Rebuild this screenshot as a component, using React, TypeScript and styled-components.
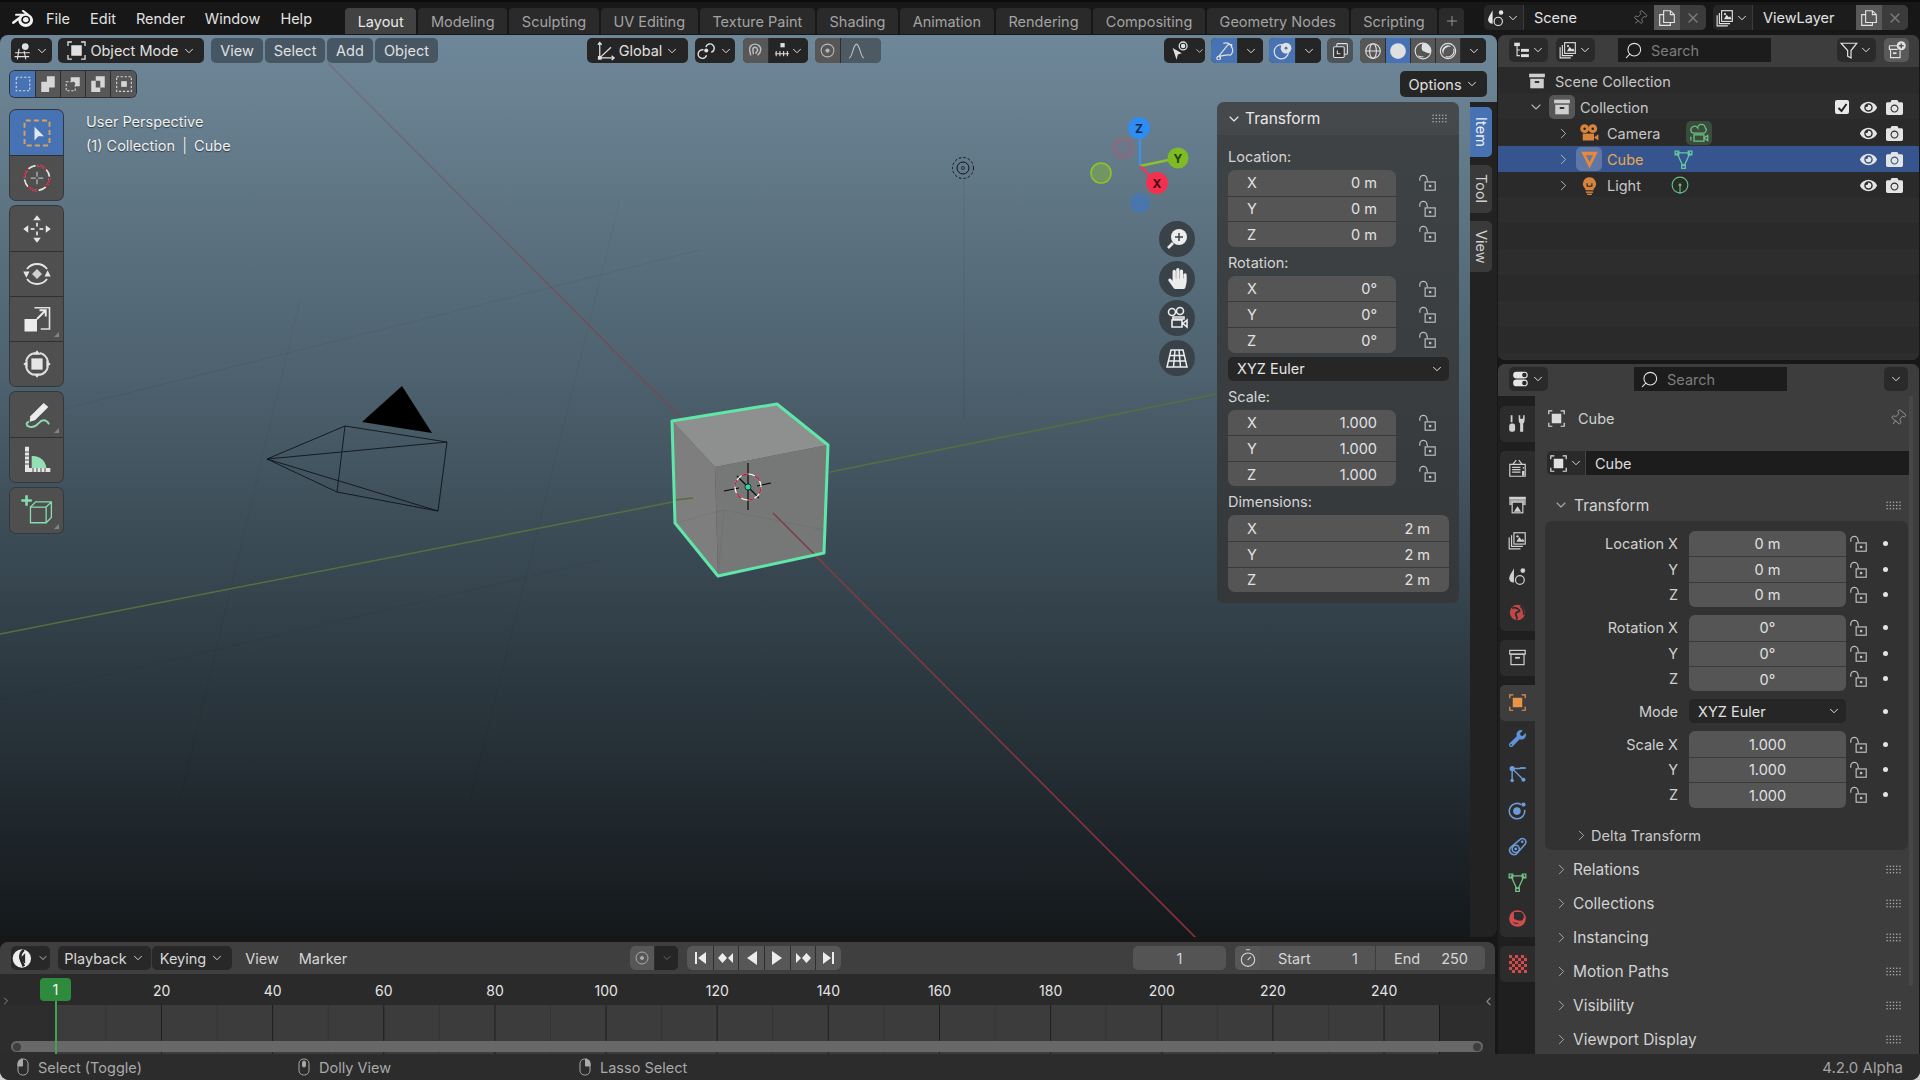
import React from 'react'
import styled, { createGlobalStyle } from 'styled-components'
import { ChevronDown, ChevronRight, ChevronLeft, Search, X, Pin, Plus, Timer } from 'lucide-react'
import { FaWrench, FaHandPaper, FaEye, FaCamera } from 'react-icons/fa'
import { SiBlender } from 'react-icons/si'

const GlobalStyle = createGlobalStyle`
  html, body {
    margin: 0;
    width: 100%;
    height: 100%;
    overflow: hidden;
    background: #cfcfcf;
  }
  * { box-sizing: border-box; }
`

const Window = styled.div`
  width: 1920px;
  height: 1080px;
  background: #171717;
  border-radius: 0 0 9px 9px;
  overflow: hidden;
  display: flex;
  flex-direction: column;
  font-family: Inter, "Liberation Sans", sans-serif;
  font-size: 14.5px;
  color: #d6d6d6;
`

/* top bar */
const TopBar = styled.header`
  height: 35px;
  flex: none;
  display: flex;
  align-items: stretch;
  border-top: 2px solid #0c0c0c;
  padding-right: 12px;
`
const LogoBox = styled.div`
  width: 46px;
  padding-left: 12px;
  display: flex;
  align-items: center;
  color: #f2f2f2;
`
const Menu = styled.nav`
  width: 299px;
  display: flex;
  align-items: center;
  gap: 20px;
`
const MenuItem = styled.span`
  color: #e2e2e2;
`
const Tabs = styled.div`
  width: 1119px;
  display: flex;
  align-items: flex-end;
  gap: 2px;
  padding-bottom: 1px;
`
const Tab = styled.div<{ $active?: boolean }>`
  height: 26px;
  padding: 0 12.65px;
  display: flex;
  align-items: center;
  border-radius: 4px 4px 0 0;
  background: ${p => (p.$active ? '#424242' : '#2a2a2a')};
  color: ${p => (p.$active ? '#e8e8e8' : '#a3a3a3')};
  white-space: nowrap;
`
const TabAdd = styled(Tab)`
  flex: 1;
  padding: 0 4px 0 0;
  justify-content: flex-end;
`
const ScenePickers = styled.div`
  margin-left: auto;
  display: flex;
  align-items: center;
  gap: 7px;
  padding-bottom: 2px;
`
const Picker = styled.div`
  height: 25px;
  display: flex;
  border-radius: 5px;
  overflow: hidden;
  box-shadow: inset 0 0 0 1px #2f2f2f;
`
const PickIcon = styled.div`
  width: 40px;
  background: #262626;
  display: flex;
  align-items: center;
  justify-content: center;
  gap: 1px;
  color: #e4e4e4;
  border-right: 1px solid #3c3c3c;
`
const PickName = styled.div<{ $w: number }>`
  width: ${p => p.$w}px;
  background: #1c1c1c;
  display: flex;
  align-items: center;
  justify-content: space-between;
  padding: 0 6px 0 10px;
  color: #e2e2e2;
`
const PickBtn = styled.div<{ $tone: 'copy' | 'close' }>`
  width: 26px;
  display: flex;
  align-items: center;
  justify-content: center;
  background: ${p => (p.$tone === 'copy' ? '#595959' : '#3b3b3b')};
  color: ${p => (p.$tone === 'copy' ? '#e4e4e4' : '#7b7b7b')};
`

/* body grid */
const Workspace = styled.main`
  flex: 1;
  min-height: 0;
  display: flex;
  gap: 1px;
`
const LeftColumn = styled.div`
  width: 1497px;
  display: flex;
  flex-direction: column;
  gap: 5px;
`
const RightColumn = styled.div`
  width: 421px;
  display: flex;
  flex-direction: column;
  gap: 4px;
`

/* viewport */
const Viewport = styled.section`
  position: relative;
  height: 902px;
  flex: none;
  border-radius: 8px;
  overflow: hidden;
  background: linear-gradient(#6f8899 0%, #4d616e 38%, #2d3a42 70%, #14181b 100%);
`
const Scene = styled.svg`
  position: absolute;
  inset: 0;
  width: 100%;
  height: 100%;
`
const ViewportLayer = styled.div`
  position: relative;
  height: 100%;
  display: flex;
  flex-direction: column;
`
const HeaderRow = styled.div`
  height: 25px;
  margin-top: 3px;
  padding: 0 11px;
  display: flex;
  flex: none;
`
const HBtn = styled.div<{ $w: number; $ml?: number; $tone?: 'dark' | 'glass' | 'blue' | 'grey' }>`
  width: ${p => p.$w}px;
  margin-left: ${p => p.$ml ?? 0}px;
  height: 25px;
  flex: none;
  display: flex;
  align-items: center;
  justify-content: center;
  gap: 3px;
  border-radius: 5px;
  overflow: hidden;
  color: #e0e0e0;
  background: ${p =>
    p.$tone === 'glass' ? '#465663' : p.$tone === 'grey' ? '#4d5458' : p.$tone === 'blue' ? '#4772b3' : '#252525'};
`
const HSegs = styled(HBtn)`
  gap: 0;
  justify-content: flex-start;
`
const ObjVisBtn = styled(HBtn)`
  padding-left: 6px;
`
const Seg = styled.div<{ $w: number; $tone?: 'dark' | 'grey' | 'blue' | 'light' | 'dim' }>`
  width: ${p => p.$w}px;
  height: 100%;
  flex: none;
  display: flex;
  align-items: center;
  justify-content: center;
  background: ${p =>
    ({ dark: '#252525', grey: '#575757', blue: '#4772b3', light: '#6a6a6a', dim: '#4e5a63' }[p.$tone ?? 'dark'])};
  & + & { border-left: 1px solid #2e2e2e; }
`
const FalloffSeg = styled(Seg)`
  padding-right: 9px;
  border-left: none;
`
const ToolSettings = styled.div`
  height: 26px;
  margin-top: 8px;
  padding: 0 10px;
  display: flex;
  justify-content: space-between;
  flex: none;
`
const ModeSet = styled.div`
  height: 26px;
  display: flex;
  border-radius: 5px;
  overflow: hidden;
  box-shadow: 0 0 0 1px #2b3136;
`
const OptionsBtn = styled(HBtn)`
  height: 26px;
`
const ViewBody = styled.div`
  flex: 1;
  margin-top: 5px;
  min-height: 0;
  display: flex;
`
const Toolbar = styled.div`
  width: 53px;
  margin: 8px 0 0 10px;
  display: flex;
  flex-direction: column;
  gap: 6px;
  flex: none;
`
const ToolGroup = styled.div`
  border-radius: 6px;
  overflow: hidden;
  background: #4f4f4f;
  box-shadow: 0 0 0 1px #32383c;
`
const ToolBtn = styled.div<{ $active?: boolean; $more?: boolean }>`
  position: relative;
  height: 45px;
  display: flex;
  align-items: center;
  justify-content: center;
  background: ${p => (p.$active ? '#4772b3' : '#4f4f4f')};
  & + & { border-top: 1px solid #303030; }
  &::after {
    content: "";
    display: ${p => (p.$more ? 'block' : 'none')};
    position: absolute;
    right: 4px;
    bottom: 4px;
    border-style: solid;
    border-width: 0 0 5px 5px;
    border-color: transparent transparent #858585 transparent;
  }
`
const ViewInfo = styled.div`
  margin: 8px 0 0 23px;
  line-height: 24px;
  color: #f0f0f0;
  text-shadow: 0 1px 1px rgba(0, 0, 0, 0.55);
  white-space: nowrap;
`
const InfoBar = styled.span`
  margin: 0 3px;
`
const NavColumn = styled.div`
  margin: 119px 22px 0 auto;
  width: 36px;
  display: flex;
  flex-direction: column;
  gap: 3.5px;
  flex: none;
`
const NavBtn = styled.div`
  width: 36px;
  height: 36px;
  border-radius: 50%;
  background: #3a4249;
  display: flex;
  align-items: center;
  justify-content: center;
  color: #ececec;
`
const NPanel = styled.aside`
  width: 242px;
  height: 501px;
  flex: none;
  border-radius: 7px;
  background: rgba(54, 54, 54, 0.82);
  overflow: hidden;
`
const NPanelHead = styled.div`
  height: 33px;
  display: flex;
  align-items: center;
  padding: 0 12px 0 9px;
  gap: 3px;
  font-size: 15.5px;
  color: #e8e8e8;
  background: rgba(90, 90, 90, 0.28);
`
const GripBox = styled.div`
  margin-left: auto;
  display: flex;
`
const NPanelBody = styled.div`
  padding: 14px 0 0 11px;
`
const NLabel = styled.div<{ $mt?: number }>`
  height: 16px;
  line-height: 16px;
  margin-top: ${p => p.$mt ?? 0}px;
  margin-bottom: 5px;
  color: #d4d4d4;
`
const NBlock = styled.div`
  margin-bottom: 8px;
`
const NRow = styled.div`
  display: flex;
  align-items: center;
`
const NField = styled.div<{ $w: number; $top?: boolean; $bottom?: boolean }>`
  width: ${p => p.$w}px;
  height: 25.6px;
  padding: 0 19px 0 19px;
  display: flex;
  align-items: center;
  justify-content: space-between;
  background: #555555;
  border-top: ${p => (p.$top ? 'none' : '1px solid #3a3a3a')};
  border-radius: ${p => (p.$top ? '7px 7px' : '0 0')} ${p => (p.$bottom ? '7px 7px' : '0 0')};
  color: #e2e2e2;
`
const LockCell = styled.div`
  width: 52px;
  padding-left: 22px;
  display: flex;
  align-items: center;
`
const NSelect = styled.div`
  width: 221px;
  height: 24px;
  margin: -4px 0 8px;
  padding: 0 5px 0 9px;
  display: flex;
  align-items: center;
  justify-content: space-between;
  background: #262626;
  border-radius: 5px;
  color: #e4e4e4;
`
const SideStrip = styled.div`
  width: 27px;
  margin-left: 11px;
  flex: none;
  background: #222222;
  padding-top: 5px;
  display: flex;
  flex-direction: column;
  gap: 8px;
`
const SideTab = styled.div<{ $active?: boolean; $h: number }>`
  width: 22px;
  height: ${p => p.$h}px;
  writing-mode: vertical-rl;
  display: flex;
  align-items: center;
  justify-content: center;
  font-size: 14.5px;
  border-radius: 0 5px 5px 0;
  background: ${p => (p.$active ? '#4772b3' : '#3a3a3a')};
  color: ${p => (p.$active ? '#f0f0f0' : '#cfcfcf')};
`

/* timeline */
const Timeline = styled.section`
  position: relative;
  height: 112px;
  flex: none;
  width: 1495px;
  border-radius: 8px 8px 0 0;
  overflow: hidden;
  background: #2a2a2a;
`
const TimeHeader = styled.div`
  height: 32px;
  padding: 4px 0 4px 11px;
  display: flex;
  background: #3f3f3f;
`
const TimeBtn = styled.div<{ $w: number; $ml?: number; $tone?: 'dark' | 'field' | 'plain' }>`
  width: ${p => p.$w}px;
  margin-left: ${p => p.$ml ?? 0}px;
  height: 24px;
  flex: none;
  display: flex;
  align-items: center;
  justify-content: center;
  gap: 4px;
  border-radius: 5px;
  overflow: hidden;
  background: ${p => (p.$tone === 'field' ? '#545454' : p.$tone === 'plain' ? 'transparent' : '#282828')};
`
const TimeSegs = styled(TimeBtn)`
  gap: 0;
  justify-content: flex-start;
`
const FieldPair = styled.div<{ $w: number }>`
  width: ${p => p.$w}px;
  height: 100%;
  padding: 0 17px 0 18px;
  display: flex;
  align-items: center;
  justify-content: space-between;
  background: #545454;
  & + & { border-left: 1px solid #3d3d3d; }
`
const Ruler = styled.div`
  height: 31px;
  padding: 2px 0 0 106px;
  display: grid;
  grid-template-columns: repeat(12, 111.15px);
  align-items: center;
  text-align: center;
  color: #e4e4e4;
  font-size: 14px;
`
const Tracks = styled.div`
  position: relative;
  height: 49px;
  background-color: #2d2d2d;
`
const FrameRange = styled.div`
  margin-left: 56px;
  width: 1384px;
  height: 100%;
  background-color: #3c3c3c;
  background-image:
    linear-gradient(90deg, #1f1f1f 1px, transparent 1px),
    linear-gradient(90deg, #333333 1px, transparent 1px);
  background-size: 111.15px 100%, 55.575px 100%;
  background-position: 105px 0, 49.5px 0;
  border-right: 1px solid #171717;
`
const Scrollbar = styled.div`
  position: absolute;
  left: 11px;
  right: 12px;
  bottom: 2px;
  height: 11px;
  border-radius: 6px;
  background: #686868;
  display: flex;
  justify-content: space-between;
  align-items: center;
  padding: 0 2px;
`
const ScrollKnob = styled.i`
  width: 8px;
  height: 8px;
  border-radius: 50%;
  background: #3e3e3e;
`
const PlayheadTag = styled.div`
  position: absolute;
  left: 40px;
  top: 36px;
  width: 31px;
  height: 23px;
  background: #2e8b3d;
  border-radius: 4px;
  display: flex;
  align-items: center;
  justify-content: center;
  color: #f2f2f2;
`
const PlayheadLine = styled.div`
  position: absolute;
  left: 55px;
  top: 59px;
  bottom: 0;
  width: 2px;
  background: #46a052;
`
const EdgeArrow = styled.div<{ $side: 'left' | 'right' }>`
  position: absolute;
  top: 53px;
  ${p => p.$side}: 0;
  color: #8a8a8a;
  display: flex;
`

/* outliner */
const Outliner = styled.section`
  height: 325px;
  flex: none;
  border-radius: 7px;
  overflow: hidden;
  background: #2a2a2a;
  display: flex;
  flex-direction: column;
`
const AreaHead = styled.div`
  height: 32px;
  flex: none;
  padding: 3px 11px 0;
  display: flex;
  background: #3d3d3d;
`
const AreaBtn = styled.div<{ $w: number; $ml?: number; $tone?: 'dark' | 'grey' }>`
  width: ${p => p.$w}px;
  margin-left: ${p => p.$ml ?? 0}px;
  height: 24px;
  flex: none;
  border-radius: 5px;
  display: flex;
  align-items: center;
  justify-content: center;
  gap: 1px;
  color: #e0e0e0;
  background: ${p => (p.$tone === 'grey' ? '#5a5a5a' : '#2a2a2a')};
`
const SearchBox = styled.div<{ $ml: number }>`
  width: 153px;
  height: 24px;
  margin-left: ${p => p.$ml}px;
  flex: none;
  display: flex;
  align-items: center;
  gap: 8px;
  padding-left: 6px;
  background: #1c1c1c;
  color: #7c7c7c;
  & > svg { color: #e0e0e0; }
`
const Tree = styled.div`
  flex: 1;
  padding-top: 1px;
  background: repeating-linear-gradient(#2a2a2a 0 26px, #2d2d2d 26px 52px);
`
const TreeRow = styled.div<{ $indent: number; $selected?: boolean }>`
  height: 26px;
  display: flex;
  align-items: center;
  padding-left: ${p => p.$indent}px;
  padding-right: 16px;
  background: ${p => (p.$selected ? '#36558e' : 'transparent')};
  color: ${p => (p.$selected ? '#e6a94e' : '#c6c6c6')};
`
const Expander = styled.span`
  width: 26px;
  flex: none;
  display: flex;
  justify-content: center;
  color: #b5b5b5;
`
const TreeIcon = styled.span<{ $halo?: boolean }>`
  width: 26px;
  height: 24px;
  flex: none;
  display: flex;
  align-items: center;
  justify-content: center;
  border-radius: 5px;
  background: ${p => (p.$halo ? 'rgba(255, 255, 255, 0.2)' : 'transparent')};
`
const TreeLabel = styled.span<{ $w?: number }>`
  margin-left: 5px;
  width: ${p => (p.$w ? `${p.$w}px` : 'auto')};
  flex: none;
`
const DataIcon = styled(TreeIcon)<{ $green?: boolean }>`
  background: ${p => (p.$green ? 'rgba(120, 200, 130, 0.22)' : 'transparent')};
`
const RowTools = styled.span`
  margin-left: auto;
  display: flex;
  align-items: center;
  gap: 9px;
  color: #e4e4e4;
`
const CheckMark = styled.span`
  width: 14px;
  height: 14px;
  margin-right: 2px;
  border-radius: 2px;
  background: #e8e8e8;
  color: #222;
  display: flex;
  align-items: center;
  justify-content: center;
`

/* properties */
const Properties = styled.section`
  height: 690px;
  flex: none;
  border-radius: 7px 7px 0 0;
  overflow: hidden;
  background: #3d3d3d;
  display: flex;
  flex-direction: column;
`
const PropsBody = styled.div`
  flex: 1;
  min-height: 0;
  display: flex;
`
const PropTabs = styled.div`
  width: 37px;
  flex: none;
  padding: 9.5px 0 0 2px;
  background: #1f1f1f;
  display: flex;
  flex-direction: column;
  gap: 9px;
`
const PropTabGroup = styled.div`
  background: #2c2c2c;
  border-radius: 5px 0 0 5px;
`
const PropTab = styled.div<{ $active?: boolean }>`
  height: 36px;
  display: flex;
  align-items: center;
  justify-content: center;
  border-radius: 5px 0 0 5px;
  background: ${p => (p.$active ? '#3d3d3d' : 'transparent')};
`
const PropMain = styled.div`
  position: relative;
  flex: 1;
  min-width: 0;
  padding: 9px 10px 0 12px;
  overflow: hidden;
`
const ContextRow = styled.div`
  height: 26px;
  display: flex;
  align-items: center;
  gap: 12px;
  color: #d0d0d0;
  padding-right: 2px;
  & > svg:last-child { margin-left: auto; color: #9a9a9a; }
`
const NameField = styled.div`
  height: 24px;
  margin-top: 20px;
  display: flex;
  border-radius: 5px 0 0 5px;
  overflow: hidden;
`
const NameIcon = styled.div`
  width: 39px;
  background: #2a2a2a;
  display: flex;
  align-items: center;
  justify-content: center;
  gap: 1px;
  border-right: 1px solid #444;
`
const NameInput = styled.div`
  flex: 1;
  background: #1c1c1c;
  padding-left: 9px;
  display: flex;
  align-items: center;
  color: #dcdcdc;
`
const PanelHead = styled.div<{ $h: number }>`
  height: ${p => p.$h}px;
  display: flex;
  align-items: center;
  gap: 3px;
  padding: 0 8px 0 6px;
  font-size: 15.5px;
  color: #d2d2d2;
  & > svg { color: #a8a8a8; flex: none; }
`
const TransformHead = styled(PanelHead)`
  padding-top: 14px;
  gap: 5px;
`
const SubPanel = styled.div`
  margin: 0 1px 3.4px -2px;
  padding: 10px 0 2px;
  border-radius: 7px;
  background: #323232;
  display: flex;
  flex-direction: column;
  gap: 8px;
`
const PropBlock = styled.div``
const PropRow = styled.div`
  height: 25.4px;
  display: grid;
  grid-template-columns: 132px 157px 27px 26px;
  column-gap: 0;
  align-items: center;
`
const ModeRow = styled(PropRow)`
  height: 24px;
`
const PropLabel = styled.span`
  text-align: right;
  margin-right: -1px;
  color: #d0d0d0;
  grid-column: 1;
  padding-right: 0;
`
const PropFieldWrap = styled.div`
  grid-column: 2;
  margin-left: 12px;
  width: 157px;
`
const PropField = styled.div<{ $top?: boolean; $bottom?: boolean }>`
  height: 25.4px;
  display: flex;
  align-items: center;
  justify-content: center;
  background: #555555;
  border-top: ${p => (p.$top ? 'none' : '1px solid #3a3a3a')};
  border-radius: ${p => (p.$top ? '6px 6px' : '0 0')} ${p => (p.$bottom ? '6px 6px' : '0 0')};
  color: #e0e0e0;
`
const PropSelect = styled.div`
  height: 24px;
  padding: 0 5px 0 9px;
  border-radius: 5px;
  display: flex;
  align-items: center;
  justify-content: space-between;
  background: #262626;
  color: #e0e0e0;
`
const PropLock = styled.div`
  grid-column: 3;
  margin-left: 15px;
  display: flex;
  justify-content: flex-start;
`
const PropDot = styled.i`
  grid-column: 4;
  margin-left: 22px;
  width: 5px;
  height: 5px;
  border-radius: 50%;
  background: #e4e4e4;
`
const DeltaRow = styled.div`
  height: 24px;
  margin-top: 8px;
  padding-left: 28px;
  display: flex;
  align-items: center;
  gap: 1px;
  color: #c8c8c8;
  & > svg { color: #a8a8a8; }
`
const PropScroll = styled.div`
  position: absolute;
  right: 6px;
  top: 0;
  height: 590px;
  width: 4px;
  border-radius: 2px;
  background: #474747;
`

/* status bar */
const StatusBar = styled.footer`
  height: 26px;
  flex: none;
  padding: 0 17px 0 14px;
  display: flex;
  align-items: center;
  background: #2c2c2c;
  color: #a9a9a9;
`
const StatusItem = styled.div`
  width: 281px;
  display: flex;
  align-items: center;
  gap: 6px;
`
const Version = styled.div`
  margin-left: auto;
  font-size: 15px;
  color: #a4a4a4;
`

/* drawn icons */
const Glyph = styled.svg<{ $s: number; $c?: string }>`
  width: ${p => p.$s}px;
  height: ${p => p.$s}px;
  flex: none;
  color: ${p => p.$c ?? 'inherit'};
`
type IconProps = { s?: number; c?: string }
const mk = (body: React.ReactNode, box = 16) => ({ s = 18, c }: IconProps) => (
  <Glyph viewBox={`0 0 ${box} ${box}`} $s={s} $c={c} fill="none" stroke="currentColor" strokeWidth="1">
    {body}
  </Glyph>
)

const Brackets = 'M1.5 4.5v-3h3M11.5 1.5h3v3M14.5 11.5v3h-3M4.5 14.5h-3v-3'
const ObjectIcon = mk(<><path d={Brackets} /><rect x="4" y="4" width="8" height="8" fill="currentColor" stroke="none" /></>)
const View3DIcon = mk(<><circle cx="10" cy="4" r="3" fill="currentColor" stroke="none" /><path d="M1 9.5h13M0.5 13h13M4.5 6l-1.5 9.5M9 8l1.5 7.5" /></>)
const OrientIcon = mk(<path d="M3 1.5v12h11M1.5 3L3 1.2 4.5 3M12.5 11.8l2 1.7-2 1.7M3 13.5L12 5M2 12.5h2v2H2z" />)
const LinkIcon = mk(<><path d="M5.5 7.500A3.600 3.600 0 1 0 8 12M7.500 5a3.600 3.600 0 1 1 4.500 4.500" strokeWidth="1.200" /><circle cx="7.800" cy="8" r="1.700" fill="currentColor" stroke="none" /></>)
const MagnetIcon = mk(<path d="M3.500 12.500L2.500 7.500C2 4 4.800 2 7.500 2s5.500 2 5.500 5c0 2-1 3.500-3 5.500M6 11.500L5.500 7.500C5.500 6 6.500 5 7.500 5s2.500 1 2.500 2.500c0 1-1 2-2 3.500" strokeWidth="1.400" />)
const SnapIcon = mk(<><rect x="7" y="1" width="4" height="4" fill="currentColor" stroke="none" /><path d="M2 11h13M3 8.500v5M6.500 8.500v5M10 8.500v5M13.500 8.500v5" /></>)
const PropCircleIcon = mk(<><circle cx="8" cy="8" r="6" /><circle cx="8" cy="8" r="1.500" fill="currentColor" /></>)
const FalloffIcon = mk(<path d="M1 15c3 0 4-13 7-13s4 13 7 13" />)
const ObjVisIcon = mk(<><path d="M2 6l7 4-3 1-1 4z" fill="currentColor" stroke="none" /><circle cx="10" cy="4.500" r="3" /><circle cx="10" cy="4.500" r="1.200" fill="currentColor" /></>)
const GizmoIcon = mk(<path d="M3 13L11 3M3 13c4-1 8-2 10-1M11 3l3 0 0 3M13 12a6 6 0 0 0-6-10M3 13a1.500 1.500 0 1 0 .1 0" />)
const OverlayIcon = mk(<><circle cx="7" cy="9" r="6" /><path d="M7 3a6 6 0 0 1 0 12 5 5 0 0 0 0-12z" fill="currentColor" stroke="none" /><circle cx="11" cy="6" r="4.500" fill="currentColor" stroke="none" /><circle cx="11" cy="6" r="1.200" fill="#4772b3" stroke="none" /></>)
const XrayIcon = mk(<><rect x="4.500" y="1.500" width="10" height="10" rx="1" /><rect x="1.500" y="4.500" width="10" height="10" rx="1" fill="#333" /><path d="M5 8v3h3" /></>)
const WireSphere = mk(<><circle cx="8" cy="8" r="6.500" /><ellipse cx="8" cy="8" rx="3" ry="6.500" /><path d="M1.500 8h13" /></>)
const SolidSphere = mk(<circle cx="8" cy="8" r="7" fill="currentColor" stroke="none" />)
const MatSphere = mk(<><circle cx="8" cy="8" r="7" fill="#555" stroke="currentColor" /><path d="M8 1a7 7 0 0 1 7 7c0 3-3 2-7 0-2-1-1-7 0-7zM3 12c2 2 5 2 6 1z" fill="currentColor" stroke="none" /></>)
const RenderSphere = mk(<><circle cx="8" cy="8" r="6.800" /><path d="M4 11a5 5 0 0 1 7-7 6 6 0 0 0-7 7z" fill="currentColor" stroke="none" /><path d="M6 13a5.500 5.500 0 0 0 7-7" /></>)
const Dash = { strokeDasharray: '2 1.500' }
const SelSet = mk(<rect x="2" y="2" width="12" height="12" {...Dash} />)
const SelExtend = mk(<path d="M7 1h7v10H9v4H2V6h5z" fill="currentColor" stroke="none" />)
const SelSub = mk(<><path d="M6 2h8v8h-4V6H6z" fill="currentColor" stroke="none" /><rect x="2" y="6" width="8" height="8" {...Dash} /></>)
const SelDiff = mk(<path fillRule="evenodd" d="M6 1h8v10h-4v4H2V5h4zM6 5v6h4V5z" fill="currentColor" stroke="none" />)
const SelAnd = mk(<><rect x="1.500" y="1.500" width="13" height="13" {...Dash} /><rect x="5.500" y="5.500" width="5" height="5" fill="currentColor" stroke="none" /></>)

const ToolSelect = mk(<><rect x="2" y="2" width="20" height="20" rx="1" stroke="#d8a35c" strokeWidth="1.500" strokeDasharray="4 2.500" /><path d="M10 7v11l3-3.500h4.500z" fill="#dfe7f5" stroke="none" /></>, 24)
const ToolCursor = mk(<><circle cx="12" cy="12" r="10" stroke="#e8e8e8" strokeWidth="1.300" strokeDasharray="6.400 1.450" /><circle cx="12" cy="12" r="10" stroke="#b0283f" strokeWidth="1.400" strokeDasharray="7.850 7.850" /><path d="M12 7v4M12 13v4M7 12h4M13 12h4" stroke="#b8b8b8" strokeWidth="1" /></>, 24)
const ToolMove = mk(<><path d="M12 1l3 4H9zM12 23l3-4H9zM1 12l4-3v6zM23 12l-4-3v6z" fill="#e6e6e6" stroke="none" /><path d="M12 7v3M12 14v3M7 12h3M14 12h3" stroke="#d0d0d0" strokeWidth="1.600" /></>, 24)
const ToolRotate = mk(<><path d="M4 8a10 10 0 0 1 16 0M20 16a10 10 0 0 1-16 0" stroke="#e6e6e6" strokeWidth="1.500" /><path d="M12 8l4 4-4 4-4-4z" fill="#cfcfcf" stroke="none" /><path d="M1 10l5 0-2.500 5zM23 14l-5 0 2.500-5z" fill="#e6e6e6" stroke="none" /></>, 24)
const ToolScale = mk(<><path d="M10 3h12v17h-7" stroke="#e0e0e0" strokeWidth="1.300" /><rect x="2" y="12" width="10" height="10" fill="#ececec" stroke="none" /><path d="M12 12l7-7M14 5h5v5" stroke="#ececec" strokeWidth="1.500" /></>, 24)
const ToolTransform = mk(<><circle cx="12" cy="12" r="9" stroke="#dedede" strokeWidth="1.600" strokeDasharray="10.500 3.630" strokeDashoffset="12.300" /><rect x="7.500" y="7.500" width="9" height="9" fill="#e6e6e6" stroke="none" /><path d="M12 1l2.800 3.500H9.200zM12 23l2.800-3.500H9.200zM1 12l3.500-2.800v5.600zM23 12l-3.500-2.800v5.600z" fill="#e6e6e6" stroke="none" /></>, 24)
const ToolAnnotate = mk(<><path d="M7 13L17 3l3.500 3L10.500 16l-4 1z" fill="#ececec" stroke="none" /><path d="M6 17c-3 1-2 4 2 4 5 0 5-5 9-5 2 0 3 1 4 3" stroke="#8fd8b0" strokeWidth="1.500" /></>, 24)
const ToolMeasure = mk(<><path d="M8 20V9a10 10 0 0 1 11 11z" fill="#93e0b4" stroke="none" /><path d="M3 21h19v-3H6V2H3z" fill="#e4e4e4" stroke="none" /><path d="M9 18v3M12 18v3M15 18v3M18 18v3M3 6h3M3 9h3M3 12h3M3 15h3" stroke="#555" strokeWidth=".8" /></>, 24)
const ToolAdd = mk(<><path d="M8 10h12v12H8zM8 10l4-4h12v12l-4 4M20 10l4-4" stroke="#86dcae" strokeWidth="1" fill="none" /><path d="M5 1v8M1 5h8" stroke="#86dcae" strokeWidth="2" /></>, 26)

const ZoomNav = mk(<><path d="M3 21l5-5" stroke="currentColor" strokeWidth="2.600" /><circle cx="14" cy="10" r="8" fill="currentColor" stroke="none" /><path d="M14 6v8M10 10h8" stroke="#3a4249" strokeWidth="1.500" /></>, 24)
const CameraNav = mk(<><circle cx="7" cy="6" r="3.500" strokeWidth="1.600" /><circle cx="15" cy="5" r="3.500" strokeWidth="1.600" /><path d="M8 11h11v2H8zM7 14h10v7H7zM22 14l-4 3.500 4 3.500z" fill="none" strokeWidth="1.600" /></>, 24)
const GridNav = mk(<path d="M6 4h12l4 17H2zM4.800 9.500h14.400M3.500 15h17M10 4l-1.500 17M14 4l1.500 17" strokeWidth="1.500" />, 24)

const LockOpen = mk(<><path d="M1.500 6.500V5a3 3 0 0 1 6 0l.5 2" /><rect x="6" y="7.500" width="8.500" height="7" strokeWidth="1" /><rect x="9.200" y="10" width="2" height="2" fill="currentColor" stroke="none" /></>)
const CopyDoc = mk(<path d="M5 1.500h6l3.500 3.500V12H5zM11 1.500V5h3.500M5 5H1.500v9.500H11V12" />)
const SceneIcon = mk(<><path d="M5 1C3 5 1 7 1 10a4 4 0 0 0 4 3z" fill="currentColor" stroke="none" /><circle cx="10" cy="11" r="3.700" /><circle cx="12.500" cy="3" r="2" fill="currentColor" stroke="none" /></>)
const LayersIcon = mk(<><rect x="5" y="1.500" width="9.500" height="9.500" /><path d="M7 9l2.500-4 2 2.500 1-1 1.500 2.500z" fill="currentColor" stroke="none" /><circle cx="8" cy="4.500" r="1" fill="currentColor" stroke="none" /><path d="M3 3.500v9.500h9.500M1 5.500v9.500h9.500" /></>)
const HierarchyIcon = mk(<><rect x="2" y="1.500" width="5" height="3" fill="currentColor" stroke="none" /><path d="M4.500 4v9H7M4.500 8H7" /><rect x="8" y="7" width="7" height="2.600" fill="currentColor" stroke="none" /><rect x="8" y="11.700" width="7" height="2.600" fill="currentColor" stroke="none" /></>)
const FilterIcon = mk(<path d="M1 2h14L9.800 8.500V15l-3-1.500V8.500z" strokeWidth="1.100" />)
const NewCollIcon = mk(<><path d="M2 4h8M2 4v3h7M3 7v7h8V8" /><rect x="5" y="9.500" width="3" height="1.500" fill="currentColor" stroke="none" /><circle cx="12" cy="4" r="3.800" fill="currentColor" stroke="none" /><path d="M12 2v4M10 4h4" stroke="#555" strokeWidth="1.200" /></>)
const BoxIcon = mk(<><rect x="1" y="1.500" width="14" height="3.200" fill="currentColor" stroke="none" /><rect x="2" y="6" width="12" height="8.500" fill="currentColor" stroke="none" /><rect x="6" y="8" width="4" height="1.800" fill="#333" stroke="none" /></>)
const BoxOutline = mk(<><rect x="1.500" y="2" width="13" height="3.200" /><rect x="2.500" y="5.200" width="11" height="8.800" /><rect x="6" y="7.500" width="4" height="1.500" fill="currentColor" stroke="none" /></>)
const CamObj = mk(<><circle cx="4.500" cy="4.500" r="3.500" fill="currentColor" stroke="none" /><circle cx="11" cy="4.500" r="3.500" fill="currentColor" stroke="none" /><circle cx="4.500" cy="4.500" r="1" fill="#222" stroke="none" /><circle cx="11" cy="4.500" r="1" fill="#222" stroke="none" /><rect x="3" y="8.500" width="9" height="5.500" fill="currentColor" stroke="none" /><path d="M15.500 9v5l-3.500-2.500z" fill="currentColor" stroke="none" /></>)
const CubeObj = mk(<path fillRule="evenodd" d="M1 1.500h14L8 15.500zM5 4.500h6L8 10z" fill="currentColor" stroke="none" />)
const BulbObj = mk(<><path d="M8 1a5.500 5.500 0 0 1 3.500 9.700V12h-7v-1.300A5.500 5.500 0 0 1 8 1z" fill="currentColor" stroke="none" /><rect x="5" y="13" width="6" height="1.200" fill="currentColor" stroke="none" /><rect x="6" y="14.800" width="4" height="1.200" fill="currentColor" stroke="none" /><path d="M6 6v3M10 6v3M6 8l2 1 2-1" stroke="#2d2d2d" strokeWidth="1" /></>)
const CamData = mk(<><path d="M1.500 6A3 3 0 0 1 7 4a3 3 0 0 1 6 0c2 1 0 4-1 4H4C2.500 8 1.500 7 1.500 6z" /><rect x="4" y="9.500" width="8" height="5" /><path d="M15 10v4l-3-2zM1.500 11v3" /></>)
const MeshData = mk(<path d="M2.500 2.500h11M2.500 2.500l5 11M13.500 2.500l-5 11M1 1h3v3H1zM12 1h3v3h-3zM6.500 12.500h3v3h-3z" strokeWidth="1.100" />)
const LightData = mk(<><circle cx="8" cy="8" r="7" /><circle cx="8" cy="8" r="1.300" fill="currentColor" stroke="none" /><path d="M8 9v7" /></>)
const ToolTab = mk(<><path d="M3 1v6M5.500 1v0" strokeWidth="1.500" /><rect x="1" y="8" width="5" height="7" rx="2" fill="currentColor" stroke="none" /><path d="M9 1v4c0 2 1.200 3 1.200 3v7h2.600V8S14 7 14 5V1l-1.300 0v3h-2.400V1z" fill="currentColor" stroke="none" /></>)
const RenderTab = mk(<><path d="M1.500 4.500h13v10h-13zM9 1l3 3.500M7 1L4 4.500" /><path d="M3.500 7h7M3.500 9h7M3.500 11h7" strokeWidth="1" /><circle cx="13" cy="7.500" r=".7" fill="currentColor" stroke="none" /><rect x="11.800" y="10" width="2" height="4" fill="currentColor" stroke="none" /></>)
const OutputTab = mk(<><rect x="1" y="1.500" width="14" height="2" fill="currentColor" stroke="none" /><rect x="1" y="3.500" width="14" height="5" fill="currentColor" stroke="none" opacity=".75" /><rect x="3.500" y="6" width="9" height="9" fill="#2c2c2c" stroke="currentColor" /><path d="M5 14l3-4.500 3 4.500z" fill="currentColor" stroke="none" /></>)
const WorldTab = mk(<><circle cx="8" cy="8" r="6.500" fill="#c24848" stroke="none" /><path d="M3.500 4.500c2.500-1.500 4.500 0 6 1.500 1 2-3 1-3 3s2 3 .5 5M10.500 2.500c2.500 2 3.500 4.500 2.500 7.500" stroke="#2c2c2c" strokeWidth="1.500" /></>)
const ParticleTab = mk(<><circle cx="3.500" cy="3" r="2.200" fill="currentColor" stroke="none" /><circle cx="3.500" cy="13" r="1.500" fill="currentColor" stroke="none" /><circle cx="13" cy="12.500" r="1.700" fill="currentColor" stroke="none" /><rect x="10" y="1.800" width="5" height="1.500" fill="currentColor" stroke="none" /><path d="M3.500 3v10M3.500 3h7M3.500 3l9.500 9.500" strokeWidth="1.200" /></>)
const PhysicsTab = mk(<><path d="M11 3a6.500 6.500 0 1 0 3 4.500" strokeWidth="1.300" /><circle cx="7.500" cy="8.500" r="3.200" fill="currentColor" stroke="none" /><circle cx="13" cy="3" r="1.800" fill="currentColor" stroke="none" /></>)
const ConstraintTab = mk(<><path d="M2 9L11 1.500c3-1 5 2 3.500 4.500L7 14.500C3 16 0 12 2 9z" strokeWidth="1.300" /><circle cx="6.500" cy="10" r="3" strokeWidth="1.300" /><circle cx="6.500" cy="10" r="1.200" fill="currentColor" stroke="none" /><circle cx="12" cy="4" r="1.100" fill="currentColor" stroke="none" /></>)
const MaterialTab = mk(<><circle cx="8" cy="8" r="7" fill="#cf4c4c" stroke="none" /><path d="M5 2.500h6c3 2 3 5 1 7-2 1-4 0-7-1z" fill="#2c2c2c" stroke="none" /><path d="M4 11c2 2 4 2 5 1z" fill="#2c2c2c" stroke="none" /></>)
const TextureTab = ({ s = 18 }: IconProps) => (
  <Glyph viewBox="0 0 6 6" $s={s}>
    {Array.from({ length: 36 }).map((_, i) => {
      const x = i % 6
      const y = Math.floor(i / 6)
      return <rect key={i} x={x} y={y} width="1" height="1" fill={(x + y) % 2 === 0 ? '#cf4c4c' : '#3a2a2a'} />
    })}
  </Glyph>
)
const ClockIcon = mk(<><circle cx="7.500" cy="8" r="7" fill="currentColor" stroke="none" /><path d="M9 1.500a6.500 6.500 0 0 0-2.500 6.500L9 14" stroke="#282828" strokeWidth="2" /><path d="M10 4L6 8l4 4z" fill="#282828" stroke="none" /></>)
const MouseIcon = ({ part }: { part: 'left' | 'mid' | 'right' }) => (
  <Glyph viewBox="0 0 12 18" $s={18} fill="none" stroke="currentColor">
    <rect x="1" y="1" width="10" height="16" rx="4.500" />
    {part === 'left' && <path d="M1 8V5.500A4.500 4.500 0 0 1 5.500 1v7z" fill="currentColor" />}
    {part === 'right' && <path d="M11 8V5.500A4.500 4.500 0 0 0 6.500 1v7z" fill="currentColor" />}
    {part === 'mid' && <rect x="4.500" y="3" width="3" height="6" rx="1.500" fill="currentColor" />}
  </Glyph>
)
const Grip = () => (
  <Glyph viewBox="0 0 14 8" $s={15} fill="currentColor" $c="#b0b0b0">
    {[1, 4, 7, 10, 13].map(x => [1, 4, 7].map(y => <rect key={`${x}${y}`} x={x - 0.6} y={y - 0.6} width="1.200" height="1.200" />))}
  </Glyph>
)
const Down = ({ s = 14 }: { s?: number }) => <ChevronDown size={s} strokeWidth={1.7} />
const Right = ({ s = 17 }: { s?: number }) => <ChevronRight size={s} strokeWidth={1.4} />

const TransportIcon = ({ kind }: { kind: number }) => {
  const shapes = [
    <path key="a" d="M3 2v12h2V2zM14 2v12L6 8z" />,
    <path key="b" d="M4.500 3L0 8l4.500 5L9 8zM15 3v10L10 8z" />,
    <path key="c" d="M13 1v14L3 8z" />,
    <path key="d" d="M3 1v14l10-7z" />,
    <path key="e" d="M1 3v10l5-5zM11.500 3L7 8l4.500 5L16 8z" />,
    <path key="f" d="M13 2v12h-2V2zM2 2v12l8-6z" />,
  ]
  return <Glyph viewBox="0 0 16 16" $s={16} fill="#ececec">{shapes[kind]}</Glyph>
}

/* the 3d scene */
const SceneDrawing = () => (
  <Scene viewBox="0 35 1497 902" fill="none">
    <defs>
      <linearGradient id="redFade" x1="330" y1="60" x2="1198" y2="940" gradientUnits="userSpaceOnUse">
        <stop offset="0" stopColor="#7d4a58" stopOpacity=".35" />
        <stop offset=".5" stopColor="#7d3f4a" stopOpacity=".9" />
        <stop offset="1" stopColor="#8c2f38" />
      </linearGradient>
    </defs>
    <path d="M300 300L180 800M620 200L470 800M20 420L700 250M0 700L600 560" stroke="#000" strokeOpacity=".05" />
    <path d="M964 180V420" stroke="#000" strokeOpacity=".07" />
    <path d="M328 63L681 418M773 513L1198 940" stroke="url(#redFade)" strokeWidth="1.600" />
    <path d="M0 634L693 498M830 472L1216 394" stroke="#55703f" strokeWidth="1.500" />
    {/* camera */}
    <path d="M402 386L362 422L432 433Z" fill="#000" />
    <path d="M267 459L345 426L447 442L438 511L337 492L345 426M267 459L447 442M267 459L337 492M267 459L438 511" stroke="#101418" strokeWidth=".9" />
    {/* cube */}
    <path d="M672 421L777 404L828 445L715 467Z" fill="#8e908f" />
    <path d="M672 421L715 467L718 576L675 523Z" fill="#7d7e7d" />
    <path d="M715 467L828 445L824 553L718 576Z" fill="#767777" />
    <path d="M675 523L724 510L824 530M724 510L718 576" stroke="#000" strokeOpacity=".05" />
    <path d="M675 500L693 498" stroke="#55703f" strokeWidth="1.500" />
    <path d="M773 513L824 564" stroke="#7d3f4a" strokeWidth="1.600" />
    <path d="M672 421L777 404L828 445L824 553L718 576L675 523Z" stroke="#5fe6a8" strokeWidth="3" strokeLinejoin="round" />
    <path d="M748 463V510M724 491L739 488M757 486L771 483M737 476L759 498" stroke="#0a0a0a" strokeWidth="1.200" />
    <circle cx="748" cy="487" r="13" stroke="#fff" strokeWidth="1.200" />
    <circle cx="748" cy="487" r="13" stroke="#b5223c" strokeWidth="1.300" strokeDasharray="7 6.600" />
    <circle cx="748" cy="487" r="3" fill="#2fd8a0" stroke="#0a0a0a" strokeWidth=".7" />
    {/* light */}
    <circle cx="963" cy="168" r="10.500" stroke="#101418" strokeDasharray="2.500 2" />
    <circle cx="963" cy="168" r="6" stroke="#101418" />
    <circle cx="963" cy="168" r="1.500" stroke="#101418" strokeWidth=".7" />
    {/* gizmo */}
    <g>
      <circle cx="1123" cy="148" r="9.500" stroke="#c65067" strokeOpacity=".6" strokeWidth="1.600" fill="#c65067" fillOpacity=".1" />
      <circle cx="1101" cy="173" r="10" stroke="#8cc22e" strokeWidth="1.600" fill="#8cc22e" fillOpacity=".4" />
      <circle cx="1140" cy="203" r="10" fill="#3a77c7" fillOpacity=".6" />
      <path d="M1140 166V128" stroke="#3f8fe8" strokeWidth="2.400" />
      <path d="M1140 166L1178 158" stroke="#8cc22e" strokeWidth="2.400" />
      <path d="M1140 166L1157 183" stroke="#f0365a" strokeWidth="2.400" />
      <circle cx="1139" cy="128" r="11" fill="#2f8cf2" />
      <circle cx="1178" cy="158" r="10.500" fill="#7fbb25" />
      <circle cx="1157" cy="183" r="11" fill="#f5304f" />
      <g fontFamily="Inter, Liberation Sans, sans-serif" fontSize="12" fontWeight="700" textAnchor="middle">
        <text x="1139" y="132.500" fill="#0e2c52">Z</text>
        <text x="1178" y="162.500" fill="#23400a">Y</text>
        <text x="1157" y="187.500" fill="#4a0814">X</text>
      </g>
    </g>
  </Scene>
)

type Axis = { axis: string; value: string }
const locationRows: Axis[] = [{ axis: 'X', value: '0 m' }, { axis: 'Y', value: '0 m' }, { axis: 'Z', value: '0 m' }]
const rotationRows: Axis[] = [{ axis: 'X', value: '0°' }, { axis: 'Y', value: '0°' }, { axis: 'Z', value: '0°' }]
const scaleRows: Axis[] = [{ axis: 'X', value: '1.000' }, { axis: 'Y', value: '1.000' }, { axis: 'Z', value: '1.000' }]
const dimRows: Axis[] = [{ axis: 'X', value: '2 m' }, { axis: 'Y', value: '2 m' }, { axis: 'Z', value: '2 m' }]

const NFields = ({ rows, wide }: { rows: Axis[]; wide?: boolean }) => (
  <NBlock>
    {rows.map((r, i) => (
      <NRow key={r.axis}>
        <NField $w={wide ? 221 : 168} $top={i === 0} $bottom={i === 2}>
          <span>{r.axis}</span>
          <span>{r.value}</span>
        </NField>
        {!wide && <LockCell><LockOpen s={19} c="#bdbdbd" /></LockCell>}
      </NRow>
    ))}
  </NBlock>
)

const PropFields = ({ name, rows }: { name: string; rows: Axis[] }) => (
  <PropBlock>
    {rows.map((r, i) => (
      <PropRow key={r.axis}>
        <PropLabel>{i === 0 ? `${name} X` : r.axis}</PropLabel>
        <PropFieldWrap>
          <PropField $top={i === 0} $bottom={i === 2}>{r.value}</PropField>
        </PropFieldWrap>
        <PropLock><LockOpen s={19} c="#bdbdbd" /></PropLock>
        <PropDot />
      </PropRow>
    ))}
  </PropBlock>
)

const sectionHeads = ['Relations', 'Collections', 'Instancing', 'Motion Paths', 'Visibility', 'Viewport Display']
const rulerMarks = [20, 40, 60, 80, 100, 120, 140, 160, 180, 200, 220, 240]
const workspaceTabs = ['Modeling', 'Sculpting', 'UV Editing', 'Texture Paint', 'Shading', 'Animation', 'Rendering', 'Compositing', 'Geometry Nodes', 'Scripting']

const EyeCam = () => (
  <RowTools>
    <FaEye size={17} />
    <FaCamera size={17} />
  </RowTools>
)

export default function App() {
  return (
    <Window>
      <GlobalStyle />
      <TopBar>
        <LogoBox><SiBlender size={21} /></LogoBox>
        <Menu>
          {['File', 'Edit', 'Render', 'Window', 'Help'].map(m => <MenuItem key={m}>{m}</MenuItem>)}
        </Menu>
        <Tabs>
          <Tab $active>Layout</Tab>
          {workspaceTabs.map(t => <Tab key={t}>{t}</Tab>)}
          <TabAdd><Plus size={16} strokeWidth={1.3} /></TabAdd>
        </Tabs>
        <ScenePickers>
          <Picker>
            <PickIcon><SceneIcon s={18} /><Down /></PickIcon>
            <PickName $w={130}>Scene <Pin size={16} strokeWidth={1.2} color="#8a8a8a" style={{ transform: 'rotate(40deg)' }} /></PickName>
            <PickBtn $tone="copy"><CopyDoc s={18} /></PickBtn>
            <PickBtn $tone="close"><X size={16} /></PickBtn>
          </Picker>
          <Picker>
            <PickIcon><LayersIcon s={18} /><Down /></PickIcon>
            <PickName $w={103}>ViewLayer</PickName>
            <PickBtn $tone="copy"><CopyDoc s={18} /></PickBtn>
            <PickBtn $tone="close"><X size={16} /></PickBtn>
          </Picker>
        </ScenePickers>
      </TopBar>

      <Workspace>
        <LeftColumn>
          <Viewport>
            <SceneDrawing />
            <ViewportLayer>
              <HeaderRow>
                <HBtn $w={41}><View3DIcon s={18} /><Down /></HBtn>
                <HBtn $w={146} $ml={6}><ObjectIcon s={21} />Object Mode<Down /></HBtn>
                <HBtn $w={52} $ml={7} $tone="glass">View</HBtn>
                <HBtn $w={60} $ml={2} $tone="glass">Select</HBtn>
                <HBtn $w={46} $ml={2} $tone="glass">Add</HBtn>
                <HBtn $w={63} $ml={2} $tone="glass">Object</HBtn>
                <HBtn $w={101} $ml={149}><OrientIcon s={20} />Global<Down /></HBtn>
                <HBtn $w={40} $ml={7}><LinkIcon s={19} /><Down /></HBtn>
                <HSegs $w={65} $ml={8}>
                  <Seg $w={25} $tone="grey"><MagnetIcon s={17} c="#bdbdbd" /></Seg>
                  <Seg $w={40}><SnapIcon s={17} /><Down /></Seg>
                </HSegs>
                <HSegs $w={66} $ml={7} $tone="grey">
                  <Seg $w={25} $tone="grey"><PropCircleIcon s={17} c="#b8b8b8" /></Seg>
                  <FalloffSeg $w={41} $tone="dim"><FalloffIcon s={17} c="#c0c0c0" /></FalloffSeg>
                </HSegs>
                <ObjVisBtn $w={41} $ml={283}><ObjVisIcon s={21} /><Down /></ObjVisBtn>
                <HSegs $w={52} $ml={6}>
                  <Seg $w={26} $tone="blue"><GizmoIcon s={19} /></Seg>
                  <Seg $w={26}><Down /></Seg>
                </HSegs>
                <HSegs $w={52} $ml={6}>
                  <Seg $w={26} $tone="blue"><OverlayIcon s={19} /></Seg>
                  <Seg $w={26}><Down /></Seg>
                </HSegs>
                <HBtn $w={26} $ml={6} $tone="grey"><XrayIcon s={17} /></HBtn>
                <HSegs $w={126} $ml={7}>
                  <Seg $w={25} $tone="grey"><WireSphere s={18} /></Seg>
                  <Seg $w={25} $tone="blue"><SolidSphere s={18} /></Seg>
                  <Seg $w={25} $tone="grey"><MatSphere s={18} /></Seg>
                  <Seg $w={25} $tone="grey"><RenderSphere s={18} /></Seg>
                  <Seg $w={26}><Down /></Seg>
                </HSegs>
              </HeaderRow>
              <ToolSettings>
                <ModeSet>
                  <Seg $w={25} $tone="blue"><SelSet s={18} /></Seg>
                  <Seg $w={25} $tone="grey"><SelExtend s={18} /></Seg>
                  <Seg $w={25} $tone="grey"><SelSub s={18} /></Seg>
                  <Seg $w={25} $tone="grey"><SelDiff s={18} /></Seg>
                  <Seg $w={26} $tone="grey"><SelAnd s={18} /></Seg>
                </ModeSet>
                <OptionsBtn $w={87}>Options<Down /></OptionsBtn>
              </ToolSettings>
              <ViewBody>
                <Toolbar>
                  <ToolGroup>
                    <ToolBtn $active><ToolSelect s={30} /></ToolBtn>
                    <ToolBtn><ToolCursor s={30} /></ToolBtn>
                  </ToolGroup>
                  <ToolGroup>
                    <ToolBtn><ToolMove s={30} /></ToolBtn>
                    <ToolBtn><ToolRotate s={30} /></ToolBtn>
                    <ToolBtn $more><ToolScale s={30} /></ToolBtn>
                    <ToolBtn><ToolTransform s={30} /></ToolBtn>
                  </ToolGroup>
                  <ToolGroup>
                    <ToolBtn $more><ToolAnnotate s={32} /></ToolBtn>
                    <ToolBtn><ToolMeasure s={32} /></ToolBtn>
                  </ToolGroup>
                  <ToolGroup>
                    <ToolBtn $more><ToolAdd s={34} /></ToolBtn>
                  </ToolGroup>
                </Toolbar>
                <ViewInfo>
                  User Perspective
                  <br />
                  (1) Collection <InfoBar>|</InfoBar> Cube
                </ViewInfo>
                <NavColumn>
                  <NavBtn><ZoomNav s={24} /></NavBtn>
                  <NavBtn><FaHandPaper size={21} /></NavBtn>
                  <NavBtn><CameraNav s={24} /></NavBtn>
                  <NavBtn><GridNav s={24} /></NavBtn>
                </NavColumn>
                <NPanel>
                  <NPanelHead><Down s={16} />Transform<GripBox><Grip /></GripBox></NPanelHead>
                  <NPanelBody>
                    <NLabel>Location:</NLabel>
                    <NFields rows={locationRows} />
                    <NLabel>Rotation:</NLabel>
                    <NFields rows={rotationRows} />
                    <NSelect>XYZ Euler<Down /></NSelect>
                    <NLabel>Scale:</NLabel>
                    <NFields rows={scaleRows} />
                    <NLabel>Dimensions:</NLabel>
                    <NFields rows={dimRows} wide />
                  </NPanelBody>
                </NPanel>
                <SideStrip>
                  <SideTab $active $h={50}>Item</SideTab>
                  <SideTab $h={48}>Tool</SideTab>
                  <SideTab $h={51}>View</SideTab>
                </SideStrip>
              </ViewBody>
            </ViewportLayer>
          </Viewport>

          <Timeline>
            <TimeHeader>
              <TimeBtn $w={39}><ClockIcon s={21} c="#ececec" /><Down s={12} /></TimeBtn>
              <TimeBtn $w={93} $ml={8}>Playback<Down /></TimeBtn>
              <TimeBtn $w={80} $ml={1}>Keying<Down /></TimeBtn>
              <TimeBtn $w={40} $ml={10} $tone="plain">View</TimeBtn>
              <TimeBtn $w={56} $ml={13} $tone="plain">Marker</TimeBtn>
              <TimeSegs $w={48} $ml={279}>
                <Seg $w={24} $tone="grey"><PropCircleIcon s={16} c="#aaaaaa" /></Seg>
                <Seg $w={24}><ChevronDown size={12} color="#666" /></Seg>
              </TimeSegs>
              <TimeSegs $w={154} $ml={9}>
                {[0, 1, 2, 3, 4, 5].map(k => <Seg key={k} $w={25.66} $tone="grey"><TransportIcon kind={k} /></Seg>)}
              </TimeSegs>
              <TimeBtn $w={93} $ml={292} $tone="field">1</TimeBtn>
              <TimeSegs $w={250} $ml={9} $tone="field">
                <Seg $w={25} $tone="grey"><Timer size={20} strokeWidth={1.3} /></Seg>
                <FieldPair $w={115}><span>Start</span><span>1</span></FieldPair>
                <FieldPair $w={110}><span>End</span><span>250</span></FieldPair>
              </TimeSegs>
            </TimeHeader>
            <Ruler>
              {rulerMarks.map(n => <span key={n}>{n}</span>)}
            </Ruler>
            <Tracks>
              <FrameRange />
              <Scrollbar><ScrollKnob /><ScrollKnob /></Scrollbar>
            </Tracks>
            <PlayheadLine />
            <PlayheadTag>1</PlayheadTag>
            <EdgeArrow $side="left"><ChevronRight size={12} /></EdgeArrow>
            <EdgeArrow $side="right"><ChevronLeft size={13} /></EdgeArrow>
          </Timeline>
        </LeftColumn>

        <RightColumn>
          <Outliner>
            <AreaHead>
              <AreaBtn $w={39}><HierarchyIcon s={18} /><Down /></AreaBtn>
              <AreaBtn $w={39} $ml={8}><LayersIcon s={18} /><Down /></AreaBtn>
              <SearchBox $ml={23}><Search size={19} strokeWidth={1.4} style={{ transform: 'scaleX(-1)' }} />Search</SearchBox>
              <AreaBtn $w={39} $ml={66}><FilterIcon s={18} /><Down /></AreaBtn>
              <AreaBtn $w={25} $ml={8} $tone="grey"><NewCollIcon s={19} /></AreaBtn>
            </AreaHead>
            <Tree>
              <TreeRow $indent={26}>
                <TreeIcon><BoxIcon s={18} c="#cfcfcf" /></TreeIcon>
                <TreeLabel>Scene Collection</TreeLabel>
              </TreeRow>
              <TreeRow $indent={25}>
                <Expander><Down s={16} /></Expander>
                <TreeIcon $halo><BoxIcon s={18} c="#cfcfcf" /></TreeIcon>
                <TreeLabel>Collection</TreeLabel>
                <RowTools>
                  <CheckMark><svg width="11" height="11" viewBox="0 0 11 11"><path d="M1.500 6l3 3 5-7" fill="none" stroke="#222" strokeWidth="2" /></svg></CheckMark>
                  <FaEye size={17} />
                  <FaCamera size={17} />
                </RowTools>
              </TreeRow>
              <TreeRow $indent={52}>
                <Expander><Right /></Expander>
                <TreeIcon><CamObj s={20} c="#d8843c" /></TreeIcon>
                <TreeLabel $w={79}>Camera</TreeLabel>
                <DataIcon $green><CamData s={20} c="#6fc283" /></DataIcon>
                <EyeCam />
              </TreeRow>
              <TreeRow $indent={52} $selected>
                <Expander><Right /></Expander>
                <TreeIcon $halo><CubeObj s={19} c="#e8883c" /></TreeIcon>
                <TreeLabel $w={63}>Cube</TreeLabel>
                <DataIcon><MeshData s={19} c="#64c8a2" /></DataIcon>
                <EyeCam />
              </TreeRow>
              <TreeRow $indent={52}>
                <Expander><Right /></Expander>
                <TreeIcon><BulbObj s={19} c="#d8843c" /></TreeIcon>
                <TreeLabel $w={60}>Light</TreeLabel>
                <DataIcon><LightData s={18} c="#5fc27f" /></DataIcon>
                <EyeCam />
              </TreeRow>
            </Tree>
          </Outliner>

          <Properties>
            <AreaHead>
              <AreaBtn $w={39}>
                <svg width="18" height="18" viewBox="0 0 16 16" fill="#e6e6e6"><rect x="1" y="1.500" width="13" height="6" rx="3" /><rect x="1" y="8.500" width="13" height="6" rx="3" /><circle cx="11" cy="4.500" r="2" fill="#2a2a2a" /><circle cx="11" cy="11.500" r="2" fill="#2a2a2a" /></svg>
                <Down />
              </AreaBtn>
              <SearchBox $ml={86}><Search size={19} strokeWidth={1.4} style={{ transform: 'scaleX(-1)' }} />Search</SearchBox>
              <AreaBtn $w={24} $ml={97}><Down /></AreaBtn>
            </AreaHead>
            <PropsBody>
              <PropTabs>
                <PropTabGroup><PropTab><ToolTab s={19} c="#d0d0d0" /></PropTab></PropTabGroup>
                <PropTabGroup>
                  <PropTab><RenderTab s={19} c="#d0d0d0" /></PropTab>
                  <PropTab><OutputTab s={19} c="#d0d0d0" /></PropTab>
                  <PropTab><LayersIcon s={19} c="#d0d0d0" /></PropTab>
                  <PropTab><SceneIcon s={19} c="#d0d0d0" /></PropTab>
                  <PropTab><WorldTab s={19} /></PropTab>
                </PropTabGroup>
                <PropTabGroup><PropTab><BoxOutline s={19} c="#d0d0d0" /></PropTab></PropTabGroup>
                <PropTabGroup>
                  <PropTab $active><ObjectIcon s={19} c="#e8954a" /></PropTab>
                  <PropTab><FaWrench size={17} color="#5f93d8" /></PropTab>
                  <PropTab><ParticleTab s={19} c="#6c9bd8" /></PropTab>
                  <PropTab><PhysicsTab s={19} c="#6c9bd8" /></PropTab>
                  <PropTab><ConstraintTab s={19} c="#6c9bd8" /></PropTab>
                  <PropTab><MeshData s={19} c="#6fc283" /></PropTab>
                  <PropTab><MaterialTab s={19} /></PropTab>
                </PropTabGroup>
                <PropTabGroup><PropTab><TextureTab s={18} /></PropTab></PropTabGroup>
              </PropTabs>
              <PropMain>
                <PropScroll />
                <ContextRow>
                  <ObjectIcon s={19} c="#dcdcdc" />
                  Cube
                  <Pin size={18} strokeWidth={1.2} style={{ transform: 'rotate(40deg)' }} />
                </ContextRow>
                <NameField>
                  <NameIcon><ObjectIcon s={19} c="#e0e0e0" /><Down /></NameIcon>
                  <NameInput>Cube</NameInput>
                </NameField>
                <TransformHead $h={46}><Down s={16} />Transform<GripBox><Grip /></GripBox></TransformHead>
                <SubPanel>
                  <PropFields name="Location" rows={locationRows} />
                  <PropFields name="Rotation" rows={rotationRows} />
                  <ModeRow>
                    <PropLabel>Mode</PropLabel>
                    <PropFieldWrap><PropSelect>XYZ Euler<Down /></PropSelect></PropFieldWrap>
                    <span />
                    <PropDot />
                  </ModeRow>
                  <PropFields name="Scale" rows={scaleRows} />
                  <DeltaRow><Right />Delta Transform</DeltaRow>
                </SubPanel>
                {sectionHeads.map(h => (
                  <PanelHead key={h} $h={34}><Right />{h}<GripBox><Grip /></GripBox></PanelHead>
                ))}
              </PropMain>
            </PropsBody>
          </Properties>
        </RightColumn>
      </Workspace>

      <StatusBar>
        <StatusItem><MouseIcon part="left" />Select (Toggle)</StatusItem>
        <StatusItem><MouseIcon part="mid" />Dolly View</StatusItem>
        <StatusItem><MouseIcon part="right" />Lasso Select</StatusItem>
        <Version>4.2.0 Alpha</Version>
      </StatusBar>
    </Window>
  )
}
